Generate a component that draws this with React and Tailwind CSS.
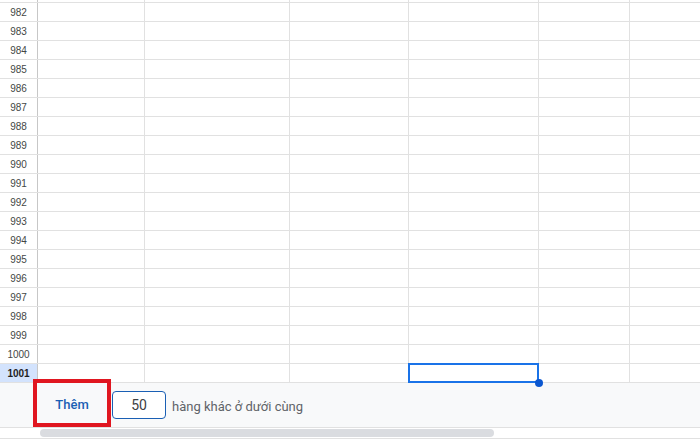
import React from "react";

const rows = [];
for (let n = 982; n <= 1001; n++) rows.push(n);

function Row({ n }) {
  const sel = n === 1001;
  return (
    <div className="flex h-[19px] border-b border-[#e1e1e1] shrink-0">
      <div
        className={
          "w-[38px] shrink-0 border-r border-[#c7c7c7] flex items-center justify-center text-[10px] " +
          (sel ? "bg-[#d3e3fd] font-bold text-[#1f1f1f]" : "bg-white text-[#444746]")
        }
      >
        {n}
      </div>
      <div className="w-[107px] shrink-0 border-r border-[#e1e1e1]" />
      <div className="w-[145px] shrink-0 border-r border-[#e1e1e1]" />
      <div className="w-[119px] shrink-0 border-r border-[#e1e1e1]" />
      <div className="w-[130px] shrink-0 border-r border-[#e1e1e1] relative">
        {sel && (
          <>
            <div className="absolute left-[-1px] top-[-1px] right-[-1px] bottom-[-1px] border-2 border-[#1a73e8]" />
            <div className="absolute right-[-5px] bottom-[-5px] w-[8px] h-[8px] rounded-full bg-[#0b57d0]" />
          </>
        )}
      </div>
      <div className="w-[91px] shrink-0 border-r border-[#e1e1e1]" />
      <div className="flex-1" />
    </div>
  );
}

export default function App() {
  return (
    <div
      className="w-[700px] h-[440px] overflow-hidden bg-white flex flex-col"
      style={{ fontFamily: "Arial, 'Liberation Sans', sans-serif" }}
    >
      <div className="flex h-[3px] border-b border-[#e1e1e1] shrink-0">
        <div className="w-[38px] shrink-0 border-r border-[#c7c7c7]" />
        <div className="w-[107px] shrink-0 border-r border-[#e1e1e1]" />
        <div className="w-[145px] shrink-0 border-r border-[#e1e1e1]" />
        <div className="w-[119px] shrink-0 border-r border-[#e1e1e1]" />
        <div className="w-[130px] shrink-0 border-r border-[#e1e1e1]" />
        <div className="w-[91px] shrink-0 border-r border-[#e1e1e1]" />
        <div className="flex-1" />
      </div>
      {rows.map((n) => (
        <Row key={n} n={n} />
      ))}
      <div
        className="h-[44px] shrink-0 bg-[#f8f9fa] flex items-center"
        style={{ fontFamily: "Roboto, 'Liberation Sans', sans-serif" }}
      >
        <div className="ml-[33px] mb-1 w-[78px] h-[48px] shrink-0 border-4 border-[#e01620] flex items-center justify-center pt-[4px] text-[13px] font-medium text-[#1a5fb4]">
          Thêm
        </div>
        <div className="ml-[1px] w-[54px] h-[28px] shrink-0 rounded-[4px] border-[1.5px] border-[#1a5fb4] bg-white flex items-center justify-center text-[14px] text-[#3c4043]">
          50
        </div>
        <div className="ml-[6px] text-[13px] text-[#5f6368] pt-[4px]">hàng khác ở dưới cùng</div>
      </div>
      <div className="h-[12px] shrink-0 border-y border-[#e1e1e1] bg-white flex items-center">
        <div className="ml-[40px] w-[454px] h-[8px] rounded-full bg-[#dadce0]" />
      </div>
      <div className="flex-1 bg-white" />
    </div>
  );
}
